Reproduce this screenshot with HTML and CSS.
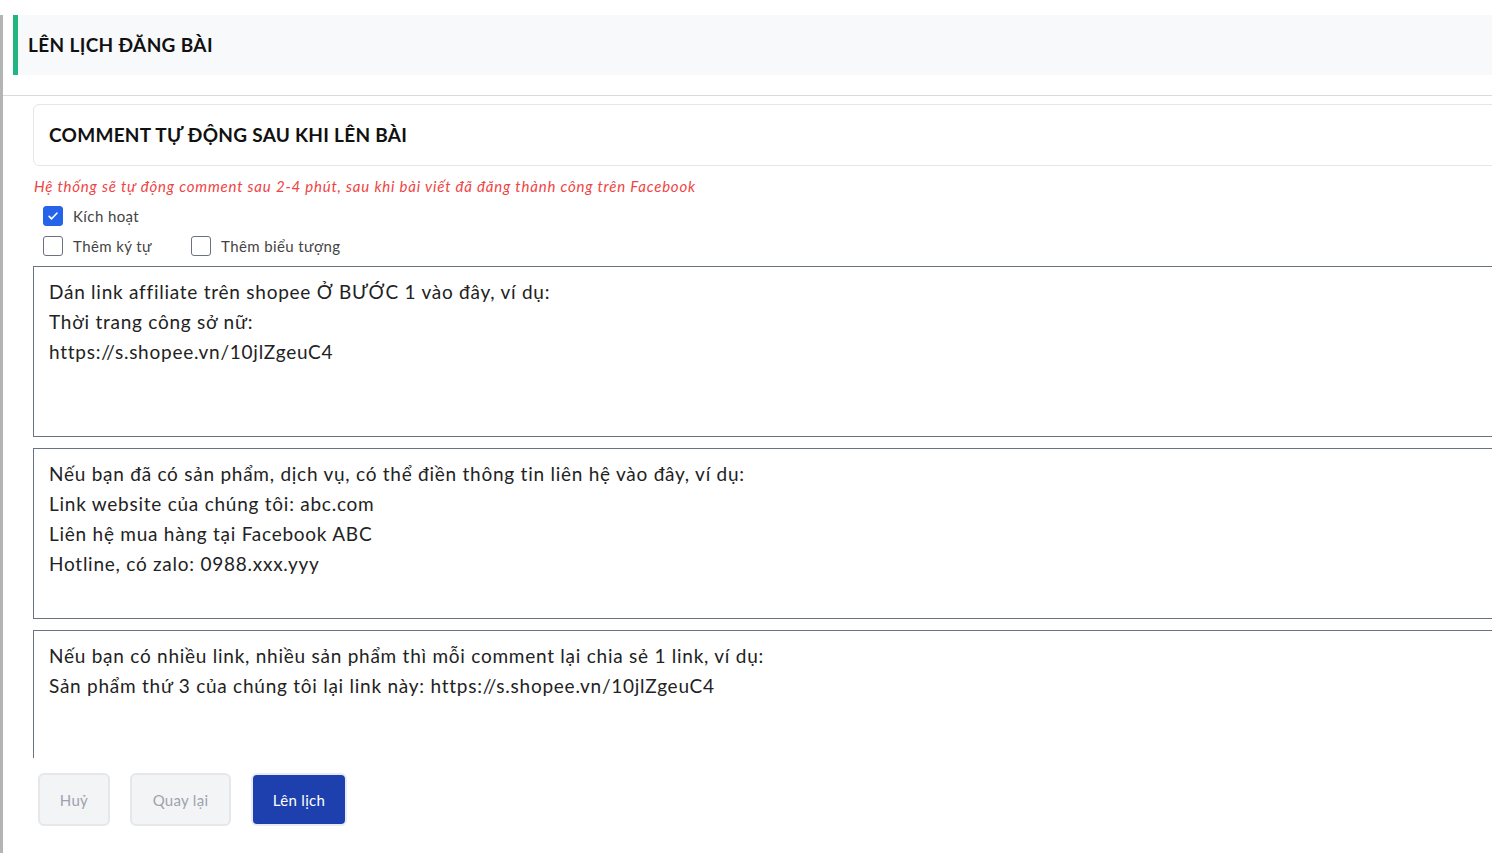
FILE: index.html
```html
<!DOCTYPE html>
<html lang="vi">
<head>
    <meta charset="UTF-8">
    <meta name="viewport" content="width=device-width, initial-scale=1.0">
    <title>Lên lịch đăng bài</title>
    <link rel="stylesheet" href="styles.css">
</head>
<body>
    <div class="page">
        <div class="page-header">
            <h1>LÊN LỊCH ĐĂNG BÀI</h1>
        </div>

        <div class="scroll-area">
            <div class="card">
                <h2>COMMENT TỰ ĐỘNG SAU KHI LÊN BÀI</h2>
            </div>

            <p class="note">Hệ thống sẽ tự động comment sau 2-4 phút, sau khi bài viết đã đăng thành công trên Facebook</p>

            <div class="options">
                <label class="check">
                    <span class="box checked">
                        <svg viewBox="0 0 20 20" width="14" height="14"><path d="M4.5 10.5l3.5 3.5 7.5-8" fill="none" stroke="#fff" stroke-width="2.4" stroke-linecap="round" stroke-linejoin="round"/></svg>
                    </span>
                    Kích hoạt
                </label>
                <div class="row">
                    <label class="check wide"><span class="box"></span>Thêm ký tự</label>
                    <label class="check"><span class="box"></span>Thêm biểu tượng</label>
                </div>
            </div>

            <textarea class="comment">Dán link affiliate trên shopee Ở BƯỚC 1 vào đây, ví dụ:
Thời trang công sở nữ:
https://s.shopee.vn/10jlZgeuC4</textarea>
            <textarea class="comment">Nếu bạn đã có sản phẩm, dịch vụ, có thể điền thông tin liên hệ vào đây, ví dụ:
Link website của chúng tôi: abc.com
Liên hệ mua hàng tại Facebook ABC
Hotline, có zalo: 0988.xxx.yyy</textarea>
            <textarea class="comment">Nếu bạn có nhiều link, nhiều sản phẩm thì mỗi comment lại chia sẻ 1 link, ví dụ:
Sản phẩm thứ 3 của chúng tôi lại link này: https://s.shopee.vn/10jlZgeuC4</textarea>
        </div>

        <div class="actions">
            <button class="btn btn-light btn-cancel">Huỷ</button>
            <button class="btn btn-light btn-back">Quay lại</button>
            <button class="btn btn-primary btn-submit">Lên lịch</button>
        </div>
    </div>
</body>
</html>
```

FILE: styles.css
```css
html, body {
    margin: 0;
    height: 100%;
    overflow: hidden;
}
body {
    font-family: Lato, "Noto Sans", sans-serif;
    background-color: #fff;
    color: #222;
}
.page {
    border-left: 3px solid #b4b4b4;
    height: 100%;
    box-sizing: border-box;
    width: 1560px;
}
.page-header {
    margin: 15px 0 0 10px;
    height: 60px;
    background-color: #f8f9fb;
    border-left: 5px solid #1fb67f;
    display: flex;
    align-items: center;
    padding-left: 10px;
}
.page-header h1 {
    margin: 0 0 2px 0;
    font-size: 19px;
    font-weight: 700;
    letter-spacing: 0.35px;
    color: #111;
}
.scroll-area {
    margin-top: 20px;
    border-top: 1px solid #d9d9de;
    height: 663px;
    box-sizing: border-box;
    overflow: hidden;
    padding: 8px 0 0 30px;
}
.card {
    border: 1px solid #e6e6e6;
    border-radius: 6px;
    height: 60px;
    display: flex;
    align-items: center;
    padding-left: 15px;
}
.card h2 {
    margin: 0 0 2px 0;
    font-size: 19px;
    font-weight: 700;
    letter-spacing: 0.28px;
    color: #111;
}
.note {
    margin: 11px 0 0 1px;
    font-size: 15px;
    line-height: 18px;
    font-style: italic;
    letter-spacing: 0.8px;
    color: #ef4444;
}
.options {
    margin: 11px 0 0 10px;
    display: flex;
    flex-direction: column;
    gap: 10px;
}
.row {
    display: flex;
}
.check {
    display: flex;
    align-items: center;
    gap: 10px;
    height: 20px;
    font-size: 15px;
    letter-spacing: 0.4px;
    color: #444;
}
.check.wide {
    width: 148px;
}
.box {
    width: 20px;
    height: 20px;
    box-sizing: border-box;
    border: 1px solid #6b7280;
    border-radius: 3px;
    display: flex;
    align-items: center;
    justify-content: center;
}
.box.checked {
    background-color: #2563eb;
    border-color: #2563eb;
}
.comment {
    display: block;
    width: 100%;
    height: 171px;
    box-sizing: border-box;
    margin: 0 0 11px 0;
    border: 1px solid #6b7280;
    border-radius: 0;
    padding: 10px 15px;
    font-family: Lato, "Noto Sans", sans-serif;
    font-size: 19px;
    line-height: 30px;
    letter-spacing: 0.75px;
    color: #222;
    resize: none;
    outline: none;
}
.options + .comment {
    margin-top: 10px;
}
.actions {
    display: flex;
    gap: 20px;
    padding: 15px 0 0 35px;
}
.btn {
    height: 53px;
    padding: 0;
    border-radius: 6px;
    font-family: Lato, "Noto Sans", sans-serif;
    font-size: 15px;
    letter-spacing: 0.3px;
    cursor: pointer;
}
.btn-cancel {
    width: 72px;
}
.btn-back {
    width: 101px;
}
.btn-submit {
    width: 96px;
}
.btn-light {
    background-color: #f3f4f6;
    border: 2px solid #e5e7eb;
    color: #9ca3af;
}
.btn-primary {
    background-color: #1e40af;
    border: 2px solid #e8ebf3;
    color: #fff;
}
```
